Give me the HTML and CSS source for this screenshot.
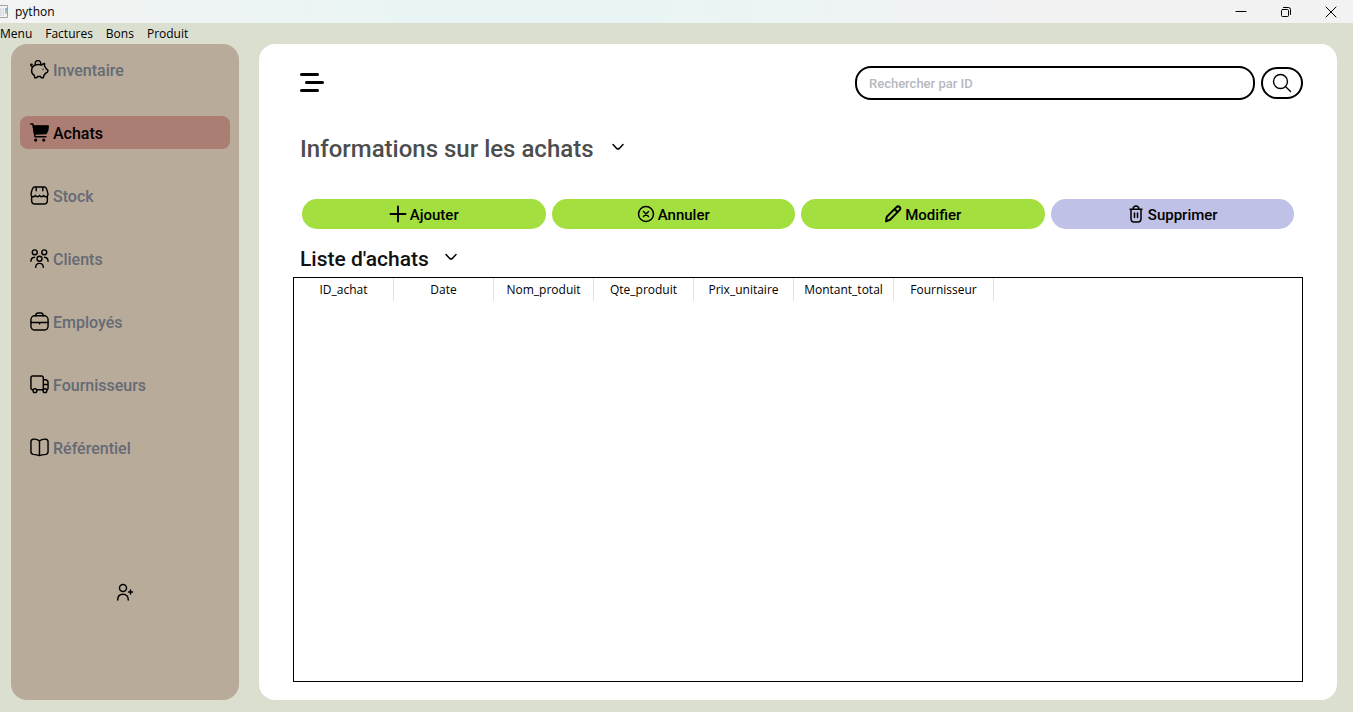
FILE: index.html
```html
<!DOCTYPE html>
<html lang="fr">
<head>
<meta charset="utf-8">
<title>python</title>
<link rel="stylesheet" href="styles.css">
</head>
<body>
<header class="titlebar">
  <svg class="app-icon" width="16" height="16" viewBox="0 0 16 16" aria-hidden="true">
    <rect x="-3" y="1.500" width="10.500" height="12" fill="#f4f4f4" stroke="#a3a3a3"/>
    <path stroke="none" fill="#dcdae4" d="M0 4h1.500v8H0zM2.500 4H4v8H2.500z"/>
    <path stroke="none" fill="#8db4dc" d="M5 4h2v3H5z"/>
    <path stroke="none" fill="#a5d0ae" d="M5 7h2v3H5z"/>
  </svg>
  <span class="app-title">python</span>
  <div class="window-controls">
    <button class="window-btn" type="button" aria-label="Réduire"><svg width="12" height="12" viewBox="0 0 12 12"><path d="M1 5.500h10"/></svg></button>
    <button class="window-btn" type="button" aria-label="Restaurer"><svg width="12" height="12" viewBox="0 0 12 12"><rect x="1.500" y="3.500" width="7" height="7" rx="1"/><path d="M3.500 1.500h5a2 2 0 0 1 2 2v5"/></svg></button>
    <button class="window-btn" type="button" aria-label="Fermer"><svg width="12" height="12" viewBox="0 0 12 12"><path d="M1 1l10 10M11 1L1 11"/></svg></button>
  </div>
</header>
<nav class="menubar" aria-label="Menu principal">
  <button class="menu-item" type="button">Menu</button>
  <button class="menu-item" type="button">Factures</button>
  <button class="menu-item" type="button">Bons</button>
  <button class="menu-item" type="button">Produit</button>
</nav>
<div class="workspace">
  <aside class="sidebar">
    <nav class="side-nav" aria-label="Sections">
      <a class="side-link" href="#inventaire">
        <svg class="side-icon" viewBox="0 0 20 20"><path d="M5.500 5.200Q9 4.300 12.300 5.200 13.500 4 15.300 3.700V6.500Q16.500 7.500 16.900 8.900L19 11l-.8 2-1.800.8Q15.700 15.300 14.700 16L14 18.700h-2.200L11 17.300H8l-.8 1.400H5L4.500 16.200C2.600 15 1.600 13 1.700 11 1.800 8.500 3 6.300 5.500 5.200z"/><path d="M.8 4.800c0 1.800 1.500 2.900 3 1.700M.8 4.800q.6-.8 1.500-.2M5.800 4.800a2.900 2.900 0 1 1 5.200 0"/><circle cx="13.800" cy="9.800" r=".2"/></svg>
        <span class="label">Inventaire</span>
      </a>
      <a class="side-link side-link-active" href="#achats" aria-current="page">
        <svg class="side-icon" viewBox="0 0 20 20"><path d="M.8 1H3l2.300 13.500h11.500"/><path fill="currentColor" d="M3.500 3h15.700l-.5 4.500-1.800 3.700-12 .3z"/><circle cx="6" cy="18" r=".9" fill="currentColor"/><circle cx="14.500" cy="18" r=".9" fill="currentColor"/></svg>
        <span class="label">Achats</span>
      </a>
      <a class="side-link" href="#stock">
        <svg class="side-icon" viewBox="0 0 20 20"><path d="M4.500 1h11c2 0 2.700 3.500 3.500 8-.5 2.800-3.800 3.200-4.700.8-1 2-3.300 2-4.300 0-1 2-3.300 2-4.300 0C4.800 12.200 1.500 11.800 1 9c.8-4.500 1.500-8 3.500-8zM6.500 1.500V5M13.500 1.500V5M1.700 11v4c0 3 1 4 3.500 4h9.600c2.500 0 3.500-1 3.500-4v-4"/></svg>
        <span class="label">Stock</span>
      </a>
      <a class="side-link" href="#clients">
        <svg class="side-icon" viewBox="0 0 20 20"><circle cx="5" cy="3.500" r="2.600"/><circle cx="15" cy="3.500" r="2.600"/><circle cx="10" cy="10.300" r="2.600"/><path d="M1 13c0-2.700 1.300-4.100 3.800-4.300M19 13c0-2.700-1.300-4.100-3.800-4.300M6 19.300c0-2.700 1.500-4.200 4-4.200s4 1.500 4 4.200"/></svg>
        <span class="label">Clients</span>
      </a>
      <a class="side-link" href="#employes">
        <svg class="side-icon" viewBox="0 0 20 20"><rect x="1" y="4" width="18" height="15" rx="4"/><path d="M6 4c0-2 1-3 2.500-3h3C13 1 14 2 14 4M1 11h18M10 11v1.500"/></svg>
        <span class="label">Employés</span>
      </a>
      <a class="side-link" href="#fournisseurs">
        <svg class="side-icon" viewBox="0 0 20 20"><path d="M3.300 15.500H2.500A1.500 1.500 0 0 1 1 14V3a2 2 0 0 1 2-2h9a2 2 0 0 1 2 2v12.500H7M14 5h2c2 0 3 1 3 3v6c0 1-.5 1.500-1.300 1.500M14 10h5"/><circle cx="5.200" cy="16.500" r="2"/><circle cx="15.700" cy="16.500" r="2"/></svg>
        <span class="label">Fournisseurs</span>
      </a>
      <a class="side-link" href="#referentiel">
        <svg class="side-icon" viewBox="0 0 20 20"><path d="M10 3v15.500M10 3C8 1.500 5.500 1 3.500 1.300 2 1.500 1 2.300 1 4v10.500c0 1.700.8 2.500 2.500 2.700 2.500.2 4.500.6 6.500 1.300 2-.7 4-1.100 6.500-1.300 1.700-.2 2.500-1 2.500-2.700V4c0-1.700-1-2.500-2.500-2.700C14.500 1 12 1.500 10 3z"/></svg>
        <span class="label">Référentiel</span>
      </a>
    </nav>
    <button class="add-user" type="button" aria-label="Ajouter un utilisateur">
      <svg width="18" height="18" viewBox="0 0 18 18"><circle cx="7" cy="5" r="3.500"/><path d="M1.700 17c0-3.500 2-5.700 5.300-5.700s5.300 2.200 5.300 5.700M14.500 7v4M12.500 9h4"/></svg>
    </button>
  </aside>
  <main class="panel">
    <div class="toolbar">
      <button class="icon-btn" type="button" aria-label="Afficher le menu">
        <svg width="24" height="20" viewBox="0 0 24 20" class="burger"><path d="M1.500 1.500h16M6.500 9.500h16M1.500 17.500h16"/></svg>
      </button>
      <form class="search" role="search">
        <input class="search-input" type="search" aria-label="Rechercher par ID" placeholder="Rechercher par ID">
        <button class="search-btn" type="button" aria-label="Rechercher">
          <svg width="20" height="20" viewBox="0 0 20 20"><circle cx="8.500" cy="8.500" r="7"/><path d="M13.500 13.500l5 5"/></svg>
        </button>
      </form>
    </div>
    <div class="heading-row info-row">
      <h1 class="info-title">Informations sur les achats</h1>
      <button class="icon-btn" type="button" aria-label="Déplier les informations"><svg class="chevron" width="14" height="12" viewBox="0 0 14 12"><path d="M2 1.500l3.700 3.900q1.300 1.200 2.600 0L12 1.500"/></svg></button>
    </div>
    <div class="actions">
      <button class="action" type="button"><svg width="18" height="18" viewBox="0 0 18 18"><path stroke-width="1.900" d="M9 1.500v15M1.500 9h15"/></svg><span class="label">Ajouter</span></button>
      <button class="action" type="button"><svg width="18" height="18" viewBox="0 0 18 18"><circle cx="9" cy="9" r="7.500"/><path d="M6.500 6.500l5 5M11.500 6.500l-5 5"/></svg><span class="label">Annuler</span></button>
      <button class="action" type="button"><svg width="18" height="18" viewBox="0 0 18 18"><path stroke-width="2" d="M2 16.300l.8-4.600 9.400-9.300c1.200-1.200 2.500-1.200 3.400-.4.900.9.900 2.200-.3 3.400L6 14.700zM11 4.500l2.500 2.500"/></svg><span class="label">Modifier</span></button>
      <button class="action action-delete" type="button"><svg width="18" height="18" viewBox="0 0 18 18"><path d="M4 4.500v9C4 16 5 17 7 17h4c2 0 3-1 3-3.500v-9M3 4.300h12M6 4c.3-2 1.200-3 3-3s2.700 1 3 3M7.500 8v4.500M10.500 8v4.500"/></svg><span class="label">Supprimer</span></button>
    </div>
    <div class="heading-row list-row">
      <h2 class="list-title">Liste d'achats</h2>
      <button class="icon-btn" type="button" aria-label="Replier la liste"><svg class="chevron" width="14" height="12" viewBox="0 0 14 12"><path d="M2 1.500l3.700 3.900q1.300 1.200 2.600 0L12 1.500"/></svg></button>
    </div>
    <div class="table-box">
      <table class="purchases">
        <thead>
          <tr><th scope="col">ID_achat</th><th scope="col">Date</th><th scope="col">Nom_produit</th><th scope="col">Qte_produit</th><th scope="col">Prix_unitaire</th><th scope="col">Montant_total</th><th scope="col">Fournisseur</th></tr>
        </thead>
        <tbody></tbody>
      </table>
    </div>
  </main>
</div>
</body>
</html>
```

FILE: styles.css
```css
* { box-sizing: border-box; }

body {
  margin: 0;
  min-height: 100vh;
  display: flex;
  flex-direction: column;
  background: #dbdfd0;
  color: #000;
  font: 12px/16px "Segoe UI", "Open Sans", "Noto Sans", sans-serif;
}

button {
  margin: 0;
  padding: 0;
  border: 0;
  background: none;
  color: inherit;
  font: inherit;
}

svg {
  display: block;
  flex: none;
  fill: none;
  stroke: currentColor;
  stroke-width: 1.5;
  stroke-linecap: round;
  stroke-linejoin: round;
}

.titlebar {
  display: flex;
  align-items: center;
  height: 23px;
  background: linear-gradient(90deg, #f3f3f3 0%, #e9f5f4 30%, #e9f5f4 48%, #f2f2f3 75%);
}

.app-icon { margin-right: -1px; stroke-width: 1; }

.window-controls { display: flex; margin-left: auto; }

.window-btn {
  display: flex;
  align-items: center;
  justify-content: center;
  width: 45px;
  height: 20px;
}

.window-btn svg { stroke-width: 1; }

.menubar {
  display: flex;
  gap: 13px;
  height: 21px;
  align-items: center;
}

.workspace {
  flex: 1;
  display: flex;
  gap: 20px;
  padding: 0 16px 12px 11px;
}

.sidebar {
  flex: none;
  width: 228px;
  display: flex;
  flex-direction: column;
  align-items: center;
  padding: 9px;
  border-radius: 16px;
  background: #b8ab99;
}

.side-nav {
  align-self: stretch;
  display: flex;
  flex-direction: column;
  gap: 30px;
}

.side-link {
  display: flex;
  align-items: center;
  gap: 4px;
  height: 33px;
  padding: 0 10px;
  border-radius: 8px;
  color: #656a75;
  font: 500 16px/20px Bahnschrift, Roboto, sans-serif;
  text-decoration: none;
}

.label { padding-top: 2px; }

.side-link-active { background: #ac7d73; color: #000; }

.side-icon { width: 19px; height: 19px; color: #000; }

.add-user { margin-top: 119px; }

.panel {
  flex: 1;
  min-width: 0;
  display: flex;
  flex-direction: column;
  padding: 22px 34px 18px;
  border-radius: 16px;
  background: #fff;
}

.toolbar {
  display: flex;
  align-items: center;
  justify-content: space-between;
  gap: 24px;
  padding-left: 7px;
}

.burger { stroke-width: 3; }

.search {
  display: flex;
  align-items: center;
  gap: 6px;
  flex: 0 1 448px;
}

.search-input {
  flex: 1;
  min-width: 0;
  height: 34px;
  padding: 0 12px;
  border: 2px solid #000;
  border-radius: 16px;
  background: #fff;
  font: 500 13px/16px Bahnschrift, Roboto, sans-serif;
}

.search-input::placeholder { color: #b6b9bf; opacity: 1; }

.search-btn {
  display: flex;
  align-items: center;
  justify-content: center;
  width: 42px;
  height: 32px;
  border: 2px solid #000;
  border-radius: 16px;
}

.search-btn svg { stroke-width: 1.4; }

.heading-row {
  display: flex;
  align-items: center;
  padding-left: 7px;
}

.info-row { gap: 17px; margin-top: 33px; }
.list-row { gap: 15px; margin-top: 16px; }

.info-title, .list-title { margin: 0; font-family: Bahnschrift, Roboto, sans-serif; font-weight: 500; }
.info-title { color: #4d4d4d; font-size: 24px; line-height: 32px; }
.list-title { color: #111; font-size: 21px; line-height: 28px; }

.actions {
  display: grid;
  grid-template-columns: repeat(4, 1fr);
  gap: 6px;
  margin-top: 34px;
  padding: 0 9px;
}

.action {
  display: flex;
  align-items: center;
  justify-content: center;
  gap: 3px;
  height: 30px;
  border-radius: 15px;
  background: #a3df3e;
  font: 500 15px/20px Bahnschrift, Roboto, sans-serif;
}

.action-delete { background: #c0c1e7; }

.table-box {
  flex: 1;
  margin-top: 4px;
  border: 1px solid #000;
  overflow: auto;
}

.purchases { table-layout: fixed; width: 700px; border-spacing: 0; }

.purchases th {
  width: 100px;
  height: 23px;
  padding: 0;
  border-right: 1px solid #e2e2e2;
  font-weight: 400;
  text-align: center;
}
```
